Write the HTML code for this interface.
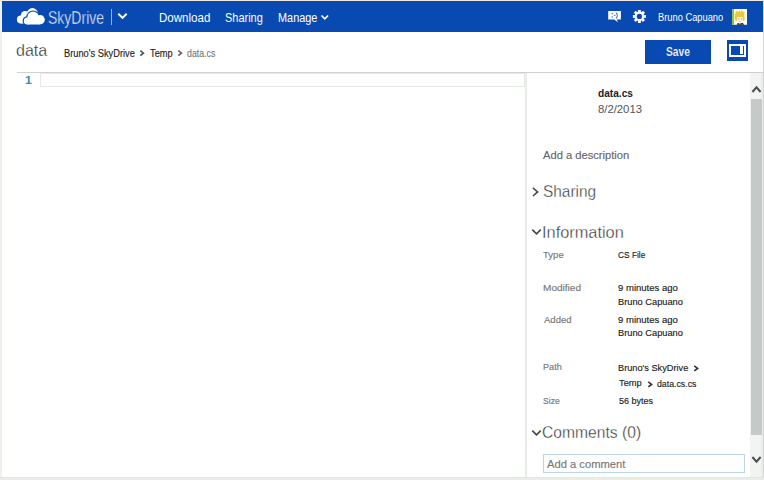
<!DOCTYPE html>
<html><head><meta charset="utf-8">
<style>
*{margin:0;padding:0;box-sizing:border-box}
html,body{width:764px;height:480px;overflow:hidden;background:#fff;font-family:"Liberation Sans",sans-serif;position:relative}
.a{position:absolute}
.t{position:absolute;white-space:nowrap;line-height:normal;transform-origin:0 0}
</style></head><body>
<!-- frame borders -->
<div class="a" style="left:0;top:0;width:764px;height:1px;background:#efe9df"></div>
<div class="a" style="left:0;top:0;width:2px;height:480px;background:#eef2eb"></div>
<div class="a" style="left:763px;top:0;width:1px;height:480px;background:#d6d6d6"></div>
<div class="a" style="left:0;top:477px;width:764px;height:1px;background:#e9e1ea"></div>
<div class="a" style="left:0;top:478px;width:764px;height:2px;background:#e8ede8"></div>
<!-- header -->
<div class="a" style="left:2px;top:1px;width:761px;height:31px;background:#094ab2"></div>
<svg class="a" style="left:14px;top:4px" width="34" height="24" viewBox="0 0 34 24">
 <g fill="#fff">
  <circle cx="6.9" cy="15.5" r="4"/><circle cx="11.2" cy="11.2" r="4.3"/><circle cx="18.4" cy="9.6" r="5.5"/>
  <rect x="6.9" y="11" width="13" height="8.5"/>
 </g>
 <g fill="#094ab2">
  <circle cx="13.4" cy="17" r="4.8"/><circle cx="19.1" cy="13.3" r="6.9"/><circle cx="26.2" cy="15.7" r="5.8"/>
  <rect x="13.4" y="15" width="12.8" height="6.7"/>
 </g>
 <g fill="#fff">
  <circle cx="13.4" cy="17" r="3.6"/><circle cx="19.1" cy="13.3" r="5.7"/><circle cx="26.2" cy="15.7" r="4.6"/>
  <rect x="13.4" y="15" width="12.8" height="5.5"/>
 </g>
</svg>
<div class="a" style="left:111px;top:9px;width:1px;height:15.5px;background:#fff;opacity:.6"></div>
<svg class="a" style="left:117px;top:12px" width="11" height="8" viewBox="0 0 11 8"><path d="M1.3 1.7 L5.5 5.9 L9.7 1.7" fill="none" stroke="#fff" stroke-width="2"/></svg>
<svg class="a" style="left:320px;top:14px" width="10" height="7" viewBox="0 0 10 7"><path d="M1.5 1.5 L4.8 4.8 L8.1 1.5" fill="none" stroke="#fff" stroke-width="1.7"/></svg>
<!-- feedback icon -->
<svg class="a" style="left:608px;top:10px" width="14" height="14" viewBox="0 0 14 14">
 <path fill="#fff" d="M0.2 1.1 H12.9 V9.6 H8.6 L10.2 12.6 L6.3 9.6 H0.2 Z"/>
 <g fill="#094ab2"><rect x="3.7" y="3.1" width="1.1" height="1.1"/><rect x="3.7" y="6.4" width="1.1" height="1.1"/><rect x="5.9" y="4.9" width="1.5" height="0.8"/></g>
 <path d="M8.3 2.6 Q10.6 5.6 8.3 8.6" fill="none" stroke="#094ab2" stroke-width="0.9"/>
</svg>
<!-- gear -->
<svg class="a" style="left:632px;top:9px" width="15" height="15" viewBox="0 0 15 15">
 <g fill="#fff" transform="translate(7.4 7.4)">
  <circle r="4.8"/>
  <path d="M-1.5 -6.5 H1.5 L1.2 -3 H-1.2 Z"/>
  <path d="M-1.5 -6.5 H1.5 L1.2 -3 H-1.2 Z" transform="rotate(45)"/>
  <path d="M-1.5 -6.5 H1.5 L1.2 -3 H-1.2 Z" transform="rotate(90)"/>
  <path d="M-1.5 -6.5 H1.5 L1.2 -3 H-1.2 Z" transform="rotate(135)"/>
  <path d="M-1.5 -6.5 H1.5 L1.2 -3 H-1.2 Z" transform="rotate(180)"/>
  <path d="M-1.5 -6.5 H1.5 L1.2 -3 H-1.2 Z" transform="rotate(225)"/>
  <path d="M-1.5 -6.5 H1.5 L1.2 -3 H-1.2 Z" transform="rotate(270)"/>
  <path d="M-1.5 -6.5 H1.5 L1.2 -3 H-1.2 Z" transform="rotate(315)"/>
 </g>
 <circle cx="7.4" cy="7.4" r="2.6" fill="#094ab2"/>
</svg>
<!-- avatar -->
<svg class="a" style="left:732px;top:9px" width="15.4" height="15.8" viewBox="0 0 15.4 15.8">
 <rect width="15.4" height="15.8" fill="#fdfdf7"/>
 <rect width="2.1" height="15.8" fill="#8dc53e"/>
 <path fill="#e6cb3c" d="M3 11 L2.6 6.5 L3.8 3.2 L5 1.3 L6.2 3.3 L7.6 1 L8.7 3 L10.1 0.8 L11.1 3.3 L12.6 2.6 L12.2 6.2 L13 10.5 L11.3 12.5 L10.3 8.3 L5.6 8.3 L4.6 12.3 Z"/>
 <path fill="#f3efe2" d="M5.6 8 H10.3 V12.6 L8 13.8 L5.6 12.6 Z"/>
 <path fill="#9a9a88" d="M6.2 9.6h1.2v0.8h-1.2zM8.8 9.6h1.2v0.8h-1.2zM7.4 12h1.4v0.6h-1.4z"/>
 <path fill="#23231f" d="M4.6 15.8 L5.8 14 L8 14.8 L10.4 13.8 L12.4 15.8 Z"/>
</svg>
<!-- save + toggle -->
<div class="a" style="left:645px;top:40px;width:66px;height:24px;background:#094ab2"></div>
<div class="a" style="left:727px;top:40px;width:20.5px;height:20.5px;background:#094ab2"></div>
<div class="a" style="left:729.3px;top:44px;width:16.5px;height:12.6px;border:2px solid #fff"></div>
<div class="a" style="left:740.4px;top:46px;width:3px;height:8.3px;background:#fff"></div>
<!-- breadcrumb chevrons -->
<svg class="a" style="left:139px;top:49px" width="7" height="9" viewBox="0 0 7 9"><path d="M1.3 1.7 L4.4 4.2 L1.3 6.7" fill="none" stroke="#555" stroke-width="1.7"/></svg>
<svg class="a" style="left:177px;top:49px" width="7" height="9" viewBox="0 0 7 9"><path d="M1.3 1.7 L4.4 4.2 L1.3 6.7" fill="none" stroke="#666" stroke-width="1.7"/></svg>
<!-- rules -->
<div class="a" style="left:17px;top:72px;width:746px;height:1px;background:#cfd1cf"></div>
<div class="a" style="left:40px;top:73px;width:485px;height:14px;border:1px solid #e4ebe4"></div>
<div class="a" style="left:525px;top:73px;width:2px;height:404px;background:#e8ede8"></div>
<!-- side panel chevrons -->
<svg class="a" style="left:531px;top:187px" width="9" height="10" viewBox="0 0 9 10"><path d="M1.9 0.8 L6.6 4.9 L1.9 9" fill="none" stroke="#4a4a4a" stroke-width="1.6"/></svg>
<svg class="a" style="left:531px;top:228px" width="11" height="9" viewBox="0 0 11 9"><path d="M1.3 1.6 L5.5 5.8 L9.7 1.6" fill="none" stroke="#444" stroke-width="1.6"/></svg>
<svg class="a" style="left:531px;top:429px" width="11" height="9" viewBox="0 0 11 9"><path d="M1.3 1.6 L5.5 5.8 L9.7 1.6" fill="none" stroke="#444" stroke-width="1.6"/></svg>
<svg class="a" style="left:693px;top:365px" width="7" height="8" viewBox="0 0 7 8"><path d="M1.3 0.9 L4.6 3.4 L1.3 5.9" fill="none" stroke="#333" stroke-width="1.65"/></svg>
<svg class="a" style="left:646.5px;top:380.5px" width="7" height="8" viewBox="0 0 7 8"><path d="M1.3 0.9 L4.6 3.4 L1.3 5.9" fill="none" stroke="#333" stroke-width="1.65"/></svg>
<!-- comment box -->
<div class="a" style="left:543px;top:454px;width:202px;height:19px;border:1px solid #bcd4ec"></div>
<!-- scrollbar -->
<div class="a" style="left:750px;top:73px;width:11px;height:404px;background:#f3f3f3"></div>
<div class="a" style="left:761px;top:73px;width:2px;height:404px;background:#e8ede8"></div>
<div class="a" style="left:750.5px;top:99px;width:11px;height:336px;background:#c5cac8"></div>
<svg class="a" style="left:751px;top:84px" width="11" height="10" viewBox="0 0 11 10"><path d="M1.4 8 L5.5 3.3 L9.6 8" fill="none" stroke="#4a4e4c" stroke-width="2"/></svg>
<svg class="a" style="left:751px;top:455px" width="11" height="10" viewBox="0 0 11 10"><path d="M1.4 2 L5.5 6.7 L9.6 2" fill="none" stroke="#4a4e4c" stroke-width="2"/></svg>
<div class="t" style="left:47.72px;top:8.3px;font-size:18.0px;font-weight:400;color:#fff;transform:scaleX(0.7786);-webkit-text-stroke:0.45px #094ab2">SkyDrive</div>
<div class="t" style="left:158.58px;top:10.9px;font-size:12.6px;font-weight:400;color:#fff;transform:scaleX(0.9167);">Download</div>
<div class="t" style="left:224.53px;top:10.9px;font-size:12.6px;font-weight:400;color:#fff;transform:scaleX(0.8714);">Sharing</div>
<div class="t" style="left:277.73px;top:10.9px;font-size:12.6px;font-weight:400;color:#fff;transform:scaleX(0.8659);">Manage</div>
<div class="t" style="left:658.0px;top:11.8px;font-size:10.3px;font-weight:400;color:#fff;transform:scaleX(0.9042);">Bruno Capuano</div>
<div class="t" style="left:16.26px;top:41.2px;font-size:17.0px;font-weight:400;color:#333;transform:scaleX(0.9438);-webkit-text-stroke:0.35px #fff;color:#222">data</div>
<div class="t" style="left:63.87px;top:46.7px;font-size:11.2px;font-weight:400;color:#222;transform:scaleX(0.8298);;-webkit-text-stroke:0.15px currentColor">Bruno&#39;s SkyDrive</div>
<div class="t" style="left:149.6px;top:46.7px;font-size:11.2px;font-weight:400;color:#222;transform:scaleX(0.8296);;-webkit-text-stroke:0.15px currentColor">Temp</div>
<div class="t" style="left:187.0px;top:46.7px;font-size:11.2px;font-weight:400;color:#777;transform:scaleX(0.7861);;-webkit-text-stroke:0.15px currentColor">data.cs</div>
<div class="t" style="left:665.56px;top:45.1px;font-size:12.2px;font-weight:700;color:#fff;transform:scaleX(0.8407);-webkit-text-stroke:0.2px #094ab2">Save</div>
<div class="t" style="left:24.6px;top:74.0px;font-size:11.3px;font-weight:700;color:#2b91af;transform:scaleX(1.08);color:#3592b4">1</div>
<div class="t" style="left:597.6px;top:86.8px;font-size:10.6px;font-weight:700;color:#222;transform:scaleX(0.9556);">data.cs</div>
<div class="t" style="left:597.6px;top:102.5px;font-size:10.6px;font-weight:400;color:#555;transform:scaleX(1.0659);color:#555">8/2/2013</div>
<div class="t" style="left:543.2px;top:148.8px;font-size:11.2px;font-weight:400;color:#666;transform:scaleX(0.9977);;-webkit-text-stroke:0.15px currentColor">Add a description</div>
<div class="t" style="left:542.77px;top:181.9px;font-size:16.6px;font-weight:400;color:#444;transform:scaleX(0.9291);-webkit-text-stroke:0.35px #fff;color:#333">Sharing</div>
<div class="t" style="left:542.21px;top:222.5px;font-size:16.6px;font-weight:400;color:#444;transform:scaleX(0.9852);-webkit-text-stroke:0.35px #fff;color:#333">Information</div>
<div class="t" style="left:543.3px;top:248.6px;font-size:9.8px;font-weight:400;color:#777;transform:scaleX(0.9741);;-webkit-text-stroke:0.15px currentColor">Type</div>
<div class="t" style="left:618.3px;top:249.0px;font-size:9.8px;font-weight:400;color:#222;transform:scaleX(0.85);;-webkit-text-stroke:0.15px currentColor">CS File</div>
<div class="t" style="left:542.97px;top:282.0px;font-size:9.8px;font-weight:400;color:#777;transform:scaleX(1.0278);;-webkit-text-stroke:0.15px currentColor">Modified</div>
<div class="t" style="left:618.1px;top:282.0px;font-size:9.8px;font-weight:400;color:#222;transform:scaleX(0.9721);;-webkit-text-stroke:0.15px currentColor">9 minutes ago</div>
<div class="t" style="left:618.15px;top:295.6px;font-size:9.8px;font-weight:400;color:#222;transform:scaleX(0.9456);;-webkit-text-stroke:0.15px currentColor">Bruno Capuano</div>
<div class="t" style="left:544.0px;top:314.0px;font-size:9.8px;font-weight:400;color:#777;transform:scaleX(0.9714);;-webkit-text-stroke:0.15px currentColor">Added</div>
<div class="t" style="left:618.1px;top:314.0px;font-size:9.8px;font-weight:400;color:#222;transform:scaleX(0.9721);;-webkit-text-stroke:0.15px currentColor">9 minutes ago</div>
<div class="t" style="left:618.15px;top:327.0px;font-size:9.8px;font-weight:400;color:#222;transform:scaleX(0.9456);;-webkit-text-stroke:0.15px currentColor">Bruno Capuano</div>
<div class="t" style="left:543.27px;top:360.6px;font-size:9.8px;font-weight:400;color:#777;transform:scaleX(0.9316);;-webkit-text-stroke:0.15px currentColor">Path</div>
<div class="t" style="left:617.56px;top:362.0px;font-size:9.8px;font-weight:400;color:#222;transform:scaleX(0.9392);;-webkit-text-stroke:0.15px currentColor">Bruno&#39;s SkyDrive</div>
<div class="t" style="left:618.5px;top:377.2px;font-size:9.8px;font-weight:400;color:#222;transform:scaleX(0.95);;-webkit-text-stroke:0.15px currentColor">Temp</div>
<div class="t" style="left:656.9px;top:377.8px;font-size:9.8px;font-weight:400;color:#222;transform:scaleX(0.8932);;-webkit-text-stroke:0.15px currentColor">data.cs.cs</div>
<div class="t" style="left:543.32px;top:395.0px;font-size:9.8px;font-weight:400;color:#777;transform:scaleX(0.8778);;-webkit-text-stroke:0.15px currentColor">Size</div>
<div class="t" style="left:618.5px;top:395.0px;font-size:9.8px;font-weight:400;color:#222;transform:scaleX(0.9216);;-webkit-text-stroke:0.15px currentColor">56 bytes</div>
<div class="t" style="left:542.46px;top:422.9px;font-size:16.6px;font-weight:400;color:#444;transform:scaleX(0.9427);-webkit-text-stroke:0.35px #fff;color:#333">Comments (0)</div>
<div class="t" style="left:547.0px;top:458.1px;font-size:11.2px;font-weight:400;color:#777;transform:scaleX(1.0);;-webkit-text-stroke:0.15px currentColor">Add a comment</div>
</body></html>
